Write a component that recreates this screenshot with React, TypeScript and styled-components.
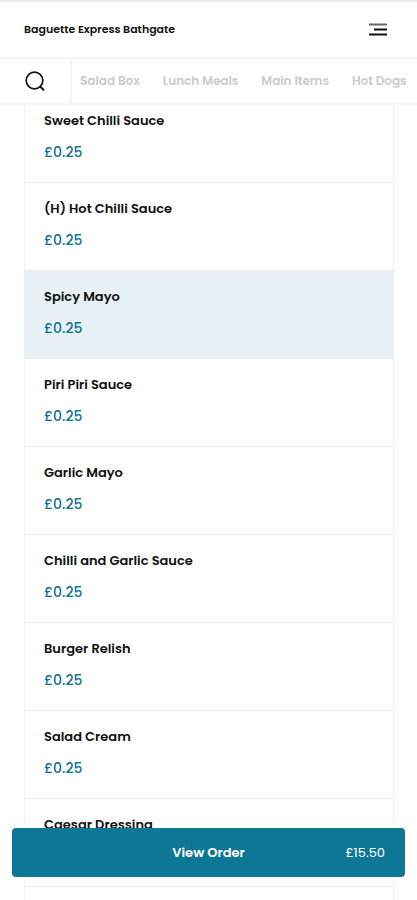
import React from "react";
import styled, { createGlobalStyle } from "styled-components";

const GlobalStyle = createGlobalStyle`
  *, *::before, *::after { box-sizing: border-box; }
  body {
    margin: 0;
    background: #ffffff;
    color: #111111;
    font-family: Poppins, Inter, "Open Sans", sans-serif;
  }
`;

const Page = styled.div`
  display: flex;
  flex-direction: column;
  height: 100vh;
  overflow: hidden;
`;

const TopArea = styled.div`
  position: fixed;
  top: 0;
  left: 0;
  right: 0;
  z-index: 2;
  background: #ffffff;
  border-top: 2px solid #ebebeb;
`;

const Header = styled.header`
  display: flex;
  align-items: center;
  justify-content: space-between;
  height: 57px;
  padding: 0 30px 1px 24px;
  border-bottom: 2px solid #f5f5f5;
`;

const Title = styled.h1`
  margin: 0;
  font-size: 11px;
  line-height: 16px;
  font-weight: 600;
`;

const IconButton = styled.button`
  display: flex;
  align-items: center;
  justify-content: center;
  padding: 0;
  border: 0;
  background: none;
  color: #111111;
  cursor: pointer;
`;

const Categories = styled.div`
  display: flex;
  height: 46px;
  border-bottom: 2px solid #f5f5f5;
`;

const SearchButton = styled(IconButton)`
  flex: 0 0 72px;
  border-right: 2px solid #f5f5f5;
`;

const CategoryNav = styled.nav`
  display: flex;
  flex: 1;
  align-items: center;
  gap: 23px;
  min-width: 0;
  padding-left: 8px;
  overflow: hidden;
`;

const CategoryLink = styled.a`
  flex: none;
  color: #cbcbcb;
  font-size: 12px;
  line-height: 16px;
  font-weight: 600;
  text-decoration: none;
`;

const Options = styled.ul`
  flex: 1 0 auto;
  margin: 95px 23px 0 24px;
  padding: 0;
  border: solid #f0f0f0;
  border-width: 0 1px;
  list-style: none;
`;

const Option = styled.li`
  border-bottom: 1px solid #ebeeee;
`;

const OptionButton = styled.button<{ $selected: boolean }>`
  display: flex;
  flex-direction: column;
  gap: 11px;
  width: 100%;
  padding: 16px 19px 20px;
  border: 0;
  background: ${(p) => (p.$selected ? "#e7f0f5" : "#ffffff")};
  font-family: inherit;
  text-align: left;
  cursor: pointer;
`;

const Name = styled.span`
  color: #111111;
  font-size: 13px;
  line-height: 20px;
  font-weight: 600;
`;

const Price = styled.span`
  color: #0f7396;
  font-size: 14px;
  line-height: 20px;
  font-weight: 500;
`;

const OrderBar = styled.button`
  position: fixed;
  left: 12px;
  right: 12px;
  bottom: 23px;
  z-index: 2;
  display: grid;
  grid-template-columns: 1fr auto 1fr;
  align-items: center;
  padding: 14px 20px;
  border: 0;
  border-radius: 4px;
  background: #0f7796;
  color: #ffffff;
  font-family: inherit;
  font-size: 13px;
  line-height: 21px;
  cursor: pointer;
`;

const OrderLabel = styled.span`
  grid-column: 2;
  font-weight: 600;
`;

const OrderTotal = styled.span`
  justify-self: end;
  font-weight: 400;
`;

const categories = ["Salad Box", "Lunch Meals", "Main Items", "Hot Dogs"];

const options = [
  "Sweet Chilli Sauce",
  "(H) Hot Chilli Sauce",
  "Spicy Mayo",
  "Piri Piri Sauce",
  "Garlic Mayo",
  "Chilli and Garlic Sauce",
  "Burger Relish",
  "Salad Cream",
  "Caesar Dressing",
].map((name) => ({ name, price: "£0.25" }));

const MenuIcon = () => (
  <svg width="18" height="13" viewBox="0 0 18 13" aria-hidden="true">
    <path d="M0 1.5h18" stroke="#666666" strokeWidth="2" />
    <path d="M5 6.5h13M0 11.5h18" stroke="currentColor" strokeWidth="2" />
  </svg>
);

const SearchIcon = () => (
  <svg width="20" height="20" viewBox="0 0 20 20" fill="none" stroke="currentColor" strokeWidth="1.7" aria-hidden="true">
    <circle cx="9.5" cy="9.5" r="8.3" />
    <path d="M14.8 15.2l4.2 4" strokeWidth="2" />
  </svg>
);

export default function App() {
  const [selected, setSelected] = React.useState("Spicy Mayo");

  return (
    <Page>
      <GlobalStyle />
      <TopArea>
        <Header>
          <Title>Baguette Express Bathgate</Title>
          <IconButton type="button" aria-label="Menu">
            <MenuIcon />
          </IconButton>
        </Header>
        <Categories>
          <SearchButton type="button" aria-label="Search">
            <SearchIcon />
          </SearchButton>
          <CategoryNav>
            {categories.map((category) => (
              <CategoryLink key={category} href="#">
                {category}
              </CategoryLink>
            ))}
          </CategoryNav>
        </Categories>
      </TopArea>
      <Options>
        {options.map(({ name, price }) => (
          <Option key={name}>
            <OptionButton
              type="button"
              $selected={name === selected}
              aria-pressed={name === selected}
              onClick={() => setSelected(name)}
            >
              <Name>{name}</Name>
              <Price>{price}</Price>
            </OptionButton>
          </Option>
        ))}
      </Options>
      <OrderBar type="button">
        <OrderLabel>View Order</OrderLabel>
        <OrderTotal>£15.50</OrderTotal>
      </OrderBar>
    </Page>
  );
}
